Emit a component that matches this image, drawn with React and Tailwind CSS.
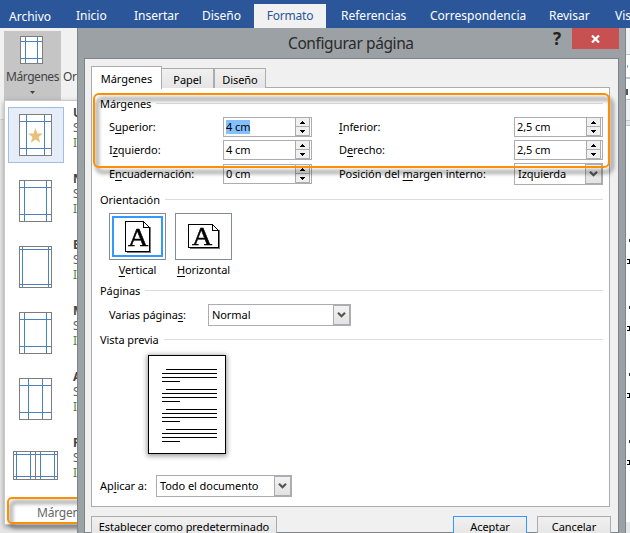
import React from "react";

const K = ({ children }) => (
  <span className="underline decoration-1 underline-offset-2">{children}</span>
);

function SectionTitle({ children, className = "" }) {
  return (
    <div className={`flex h-4 shrink-0 ${className}`}>
      <span className="shrink-0 leading-4">{children}</span>
      <span className="mt-[7px] ml-[5px] h-px flex-1 bg-[#dcdcdc]" />
    </div>
  );
}

function Spinner({ value, selected }) {
  return (
    <div className="flex h-5 w-[89px] shrink-0 border border-[#abadb3] bg-white">
      <div className="flex flex-1 items-center pl-[2px]">
        <span className={selected ? "bg-[#84c0fb] leading-[14px]" : "leading-[14px]"}>{value}</span>
      </div>
      <div className="mr-px flex w-[15px] flex-col border-x border-[#acacac] bg-[#f0f0f0]">
        <div className="flex flex-1 items-center justify-center border-b border-[#acacac]">
          <svg width="5" height="3" viewBox="0 0 5 3" shapeRendering="crispEdges">
            <path d="M2 0h1v1h1v1h1v1H0V2h1V1h1z" />
          </svg>
        </div>
        <div className="flex flex-1 items-center justify-center border-b border-[#acacac]">
          <svg width="5" height="3" viewBox="0 0 5 3" shapeRendering="crispEdges">
            <path d="M0 0h5v1H4v1H3v1H2V2H1V1H0z" />
          </svg>
        </div>
      </div>
    </div>
  );
}

function Combo({ value, className }) {
  return (
    <div className={`flex h-[22px] shrink-0 border border-[#abadb3] bg-white ${className}`}>
      <span className="flex-1 pl-[3px] leading-5">{value}</span>
      <div className="flex w-[17px] items-center justify-center border border-[#acacac] bg-gradient-to-b from-[#f2f2f2] to-[#e3e3e3]">
        <svg width="9" height="7" viewBox="0 0 9 7">
          <path d="M1 0.8 4.5 4.3 8 0.8" fill="none" stroke="#555" strokeWidth="2.2" />
        </svg>
      </div>
    </div>
  );
}

function PageIcon({ w, h, vs, hs, star }) {
  return (
    <svg className="shrink-0" width={w} height={h} viewBox={`0 0 ${w} ${h}`} shapeRendering="crispEdges">
      <rect x=".5" y=".5" width={w - 1} height={h - 1} fill="#fff" stroke="#7d7d7d" />
      {vs.map((x) => (
        <rect key={x} x={x} y="1" width="1" height={h - 2} fill="#4a82bd" />
      ))}
      {hs.map((y) => (
        <rect key={y} x="1" y={y} width={w - 2} height="1" fill="#4a82bd" />
      ))}
      {star && (
        <path
          shapeRendering="auto"
          d="M16.500 14l1.900 5.600h5.600l-4.500 3.500 1.700 5.700-4.700-3.400-4.700 3.400 1.700-5.700-4.500-3.500h5.600z"
          fill="#e9bf7b"
        />
      )}
    </svg>
  );
}

const presets = [
  { l: "U", w: 33, h: 42, vs: [7, 25], hs: [7, 34], star: true },
  { l: "N", w: 33, h: 42, vs: [5, 27], hs: [7, 34] },
  { l: "E", w: 33, h: 42, vs: [3, 29], hs: [3, 38] },
  { l: "M", w: 33, h: 42, vs: [5, 27], hs: [7, 34] },
  { l: "A", w: 33, h: 42, vs: [9, 23], hs: [7, 34] },
  { l: "R", w: 45, h: 29, vs: [3, 17, 27, 41], hs: [3, 25], spread: true },
];

function Preset({ p }) {
  return (
    <div className="flex h-[66px] shrink-0">
      <div
        className={`ml-[3px] flex h-14 w-14 shrink-0 items-center justify-center border pr-px ${
          p.star ? "border-[#a3bde3] bg-[#e5edf9]" : "border-transparent"
        }`}
      >
        <div className="relative flex">
          <PageIcon {...p} />
          {p.spread && <span className="absolute inset-y-0 left-[22px] w-px bg-[#7d7d7d]" />}
        </div>
      </div>
      <div className="-mt-[2px] ml-[9px] flex w-10 flex-col text-[12px] leading-[15px] text-[#666]">
        <b className="text-[#444]">{p.l}</b>
        <span>S</span>
        <span className="text-[#4b8a3b]">I</span>
      </div>
    </div>
  );
}

function Ribbon() {
  const tab = "shrink-0 leading-8";
  return (
    <div className="flex h-7 shrink-0 overflow-hidden bg-[#2b579a] text-[12px] text-white">
      <span className={`${tab} w-[67px] pl-[9px] pt-px`}>Archivo</span>
      <span className={`${tab} w-[58px] pl-[9px]`}>Inicio</span>
      <span className={`${tab} w-[68px] pl-[9px]`}>Insertar</span>
      <span className={`${tab} w-[61px] pl-[9px]`}>Diseño</span>
      <span className="mt-1 w-[72px] shrink-0 bg-[#f1f1f1] text-center leading-6 tracking-[-0.2px] text-[#2b579a]">
        Formato
      </span>
      <span className={`${tab} w-[104px] pl-[15px]`}>Referencias</span>
      <span className={`${tab} w-[119px]`}>Correspondencia</span>
      <span className={`${tab} w-[66px]`}>Revisar</span>
      <span className={tab}>Vis</span>
    </div>
  );
}

function LeftPane() {
  return (
    <div className="relative flex w-[77px] shrink-0 flex-col overflow-hidden bg-[#e6e6e6]">
      <div className="flex h-[72px] shrink-0 bg-[#f1f1f1] pt-[3px] pl-1 text-[12px] text-[#444]">
        <div className="flex w-[57px] shrink-0 flex-col items-center bg-[#c5c5c5] pt-[5px]">
          <div className="flex pr-[2px]">
            <PageIcon w={23} h={28} vs={[5, 17]} hs={[5, 22]} />
          </div>
          <span className="mt-[5px] leading-4 tracking-[-0.45px]">Márgenes</span>
          <svg className="mt-[6px]" width="5" height="3" viewBox="0 0 5 3">
            <path d="M0 0h5L2.500 3z" fill="#444" />
          </svg>
        </div>
        <span className="mt-[38px] ml-[2px] leading-4 tracking-[-0.45px]">Or</span>
      </div>
      <div className="h-5 shrink-0 border-b border-[#d4d4d4] bg-[#f1f1f1]" />
      <div className="-mt-5 ml-1 flex h-[425px] w-[120px] shrink-0 flex-col border border-[#c8c8c8] bg-white pt-[6px] shadow-[0_2px_5px_rgba(0,0,0,0.35)]">
        {presets.map((p) => (
          <Preset key={p.l} p={p} />
        ))}
        <span className="mt-[2px] ml-8 text-[12px] leading-4 tracking-[-0.2px] whitespace-nowrap text-[#666]">
          Márgenes
        </span>
      </div>
      <div className="absolute top-[469px] left-[7px] h-[27px] w-[120px] rounded-[5px] border-2 border-[#ff8f00] drop-shadow-[3px_4px_2px_rgba(0,0,0,0.65)]" />
    </div>
  );
}

function Orientation({ landscape, active, children }) {
  return (
    <div className="flex w-[57px] flex-col">
      <div className="flex h-[47px] border border-[#838b99] p-[2px]">
        <div className={`flex flex-1 items-center justify-center ${active ? "border-2 border-[#3399ff]" : ""}`}>
          <div className="relative flex items-center justify-center">
            {landscape ? (
              <svg width="32" height="25" viewBox="0 0 32 25" shapeRendering="crispEdges">
                <path d="M2 24.500h29.500V6" fill="none" stroke="#777" />
                <path d="M.5.500h24l6 6v17H.5z" fill="#fff" stroke="#000" />
                <path d="M24.500.500v6h6" fill="none" stroke="#000" />
              </svg>
            ) : (
              <svg width="26" height="32" viewBox="0 0 26 32" shapeRendering="crispEdges">
                <path d="M2 31.500h23.500V6" fill="none" stroke="#777" />
                <path d="M.5.500h18l6 6v24H.5z" fill="#fff" stroke="#000" />
                <path d="M18.500.500v6h6" fill="none" stroke="#000" />
              </svg>
            )}
            <span
              className={`absolute scale-x-[1.12] font-['Liberation_Serif',serif] text-[25px] leading-none [-webkit-text-stroke:0.5px_black] ${
                landscape ? "top-0 left-[5px]" : "top-[4px] left-[4px]"
              }`}
            >
              A
            </span>
          </div>
        </div>
      </div>
      <span className="mt-[2px] text-center leading-4 whitespace-nowrap">{children}</span>
    </div>
  );
}

function Preview() {
  return (
    <div className="mt-[7px] ml-12 flex h-[99px] w-[78px] shrink-0 flex-col gap-[7px] border border-black bg-white pt-[13px] pl-[13px] shadow-[0_1px_5px_1px_rgba(0,0,0,0.4)]">
      {[0, 1, 2, 3].map((i) => (
        <div key={i} className="flex h-[13px] shrink-0 flex-col gap-[3px]">
          <span className="ml-1 h-px w-[51px] shrink-0 bg-black" />
          <span className="h-px w-[55px] shrink-0 bg-black" />
          <span className="h-px w-[55px] shrink-0 bg-black" />
          <span className="h-px w-[18px] shrink-0 bg-black" />
        </div>
      ))}
    </div>
  );
}

function FieldRow({ l, left, r, right, className }) {
  return (
    <div className={`flex shrink-0 items-center pl-[9px] ${className}`}>
      <span className="w-[114px] shrink-0">{l}</span>
      {left}
      <span className="ml-[27px] w-[175px] shrink-0 whitespace-nowrap">{r}</span>
      {right}
    </div>
  );
}

const button =
  "h-[22px] shrink-0 border bg-gradient-to-b from-[#f0f0f0] to-[#e5e5e5] text-center leading-5 whitespace-nowrap";

function Dialog() {
  return (
    <div className="flex w-[549px] shrink-0 flex-col border-x border-[#7e8488] bg-[#9ca1a5] px-[6px] text-[11px] tracking-[-0.07px] text-black">
      <div className="flex h-[30px] shrink-0 pl-[204px]">
        <span className="w-[265px] shrink-0 text-[15.5px] leading-[31px] tracking-[-0.4px] text-[#2a2a2a]">
          Configurar página
        </span>
        <span className="w-[19px] shrink-0 text-[17px] leading-[21px] font-bold text-[#222]">?</span>
        <div className="flex h-[21px] w-[47px] shrink-0 items-center justify-center bg-[#c75050]">
          <svg width="9" height="8" viewBox="0 0 9 8">
            <path d="M1 .5 8 7.500M8 .5 1 7.500" stroke="#fff" strokeWidth="2.200" />
          </svg>
        </div>
      </div>
      <div className="flex h-[475px] flex-col border border-[#7e8488] bg-[#f0f0f0] pl-[6px] pt-[7px]">
        <div className="z-10 flex h-[22px] shrink-0 items-end">
          <div className="-mb-px h-[23px] w-[71px] shrink-0 border border-b-0 border-[#acacac] bg-white text-center leading-[23px]">
            Márgenes
          </div>
          <div className="h-5 w-[52px] border border-l-0 border-b-0 border-[#acacac] bg-gradient-to-b from-[#f0f0f0] to-[#e5e5e5] text-center leading-[21px]">
            Papel
          </div>
          <div className="h-5 w-[52px] border border-b-0 border-[#acacac] bg-gradient-to-b from-[#f0f0f0] to-[#e5e5e5] text-center leading-[21px]">
            Diseño
          </div>
        </div>
        <div className="-mt-px relative flex h-[420px] w-[519px] shrink-0 flex-col border border-[#acacac] bg-white pt-2 pr-[6px] pl-2">
          <SectionTitle>Márgenes</SectionTitle>
          <FieldRow
            className="mt-[5px] h-5"
            l={<>S<K>u</K>perior:</>}
            left={<Spinner value="4 cm" selected />}
            r={<><K>I</K>nferior:</>}
            right={<Spinner value="2,5 cm" />}
          />
          <FieldRow
            className="mt-[3px] h-5"
            l={<>I<K>z</K>quierdo:</>}
            left={<Spinner value="4 cm" />}
            r={<>D<K>e</K>recho:</>}
            right={<Spinner value="2,5 cm" />}
          />
          <FieldRow
            className="mt-[3px] h-[22px]"
            l={<>E<K>n</K>cuadernación:</>}
            left={<Spinner value="0 cm" />}
            r={<>Posición del <K>m</K>argen interno:</>}
            right={<Combo className="w-[89px]" value="Izquierda" />}
          />
          <SectionTitle className="mt-[7px]">Orientación</SectionTitle>
          <div className="mt-[5px] ml-[9px] flex h-[65px] shrink-0 gap-[9px]">
            <Orientation active><K>V</K>ertical</Orientation>
            <Orientation landscape><K>H</K>orizontal</Orientation>
          </div>
          <SectionTitle className="mt-[5px]">Páginas</SectionTitle>
          <div className="mt-[5px] flex h-[22px] shrink-0 items-center pl-[9px]">
            <span className="w-[99px] shrink-0">Varias página<K>s</K>:</span>
            <Combo className="w-[143px]" value="Normal" />
          </div>
          <SectionTitle className="mt-[6px]">Vista previa</SectionTitle>
          <Preview />
          <div className="mt-[21px] flex h-[22px] shrink-0 items-center">
            <span className="w-14 shrink-0">Ap<K>l</K>icar a:</span>
            <Combo className="w-[136px]" value="Todo el documento" />
          </div>
          <div className="absolute top-[5px] left-[1px] h-[75px] w-[517px] rounded-[6px] border-2 border-[#ff8f00] drop-shadow-[3px_5px_2px_rgba(0,0,0,0.65)]" />
        </div>
        <div className="mt-[9px] flex shrink-0">
          <div className={`${button} w-[186px] border-[#acacac]`}>
            Establecer como <K>p</K>redeterminado
          </div>
          <div className={`${button} ml-[176px] w-[74px] border-[#3399ff]`}>Aceptar</div>
          <div className={`${button} ml-[10px] w-[74px] border-[#acacac]`}>Cancelar</div>
        </div>
      </div>
    </div>
  );
}

function RightEdge() {
  return (
    <div className="flex flex-1 flex-col overflow-hidden bg-white">
      <div className="h-[27px] shrink-0 border-b border-[#c6c6c6] bg-[#f1f1f1]" />
      <div className="h-[24px] shrink-0 border-b-2 border-[#c6c6c6] pt-[10px]">
        <div className="ml-[1px] h-[3px] w-px bg-[#6db3f2]" />
      </div>
      <div className="h-[21px] shrink-0 border-b border-[#c6c6c6] pt-[10px]">
        <div className="h-[6px] w-[2px] bg-[#555]" />
      </div>
      <div className="h-[20px] shrink-0 bg-[#f1f1f1]" />
      <div className="h-[6px] shrink-0 border-y border-[#c6c6c6] bg-[#e6e6e6]" />
      <div className="mt-[110px] flex shrink-0 flex-col">
        {[0, 1, 2, 3].map((i) => (
          <div key={i} className="flex h-[67px] shrink-0 flex-col">
            <span className="mt-[3px] ml-[3px] h-[3px] w-px bg-[#333]" />
            <span className="mt-[17px] ml-px h-[5px] w-[3px] border border-l-0 border-black" />
          </div>
        ))}
      </div>
      <div className="mt-[18px] flex-1 bg-[#e6e6e6]" />
    </div>
  );
}

export default function App() {
  return (
    <div className="flex h-[533px] w-[630px] flex-col overflow-hidden bg-white font-['Noto_Sans','Open_Sans',sans-serif]">
      <Ribbon />
      <div className="flex h-[505px] shrink-0">
        <LeftPane />
        <Dialog />
        <RightEdge />
      </div>
    </div>
  );
}
